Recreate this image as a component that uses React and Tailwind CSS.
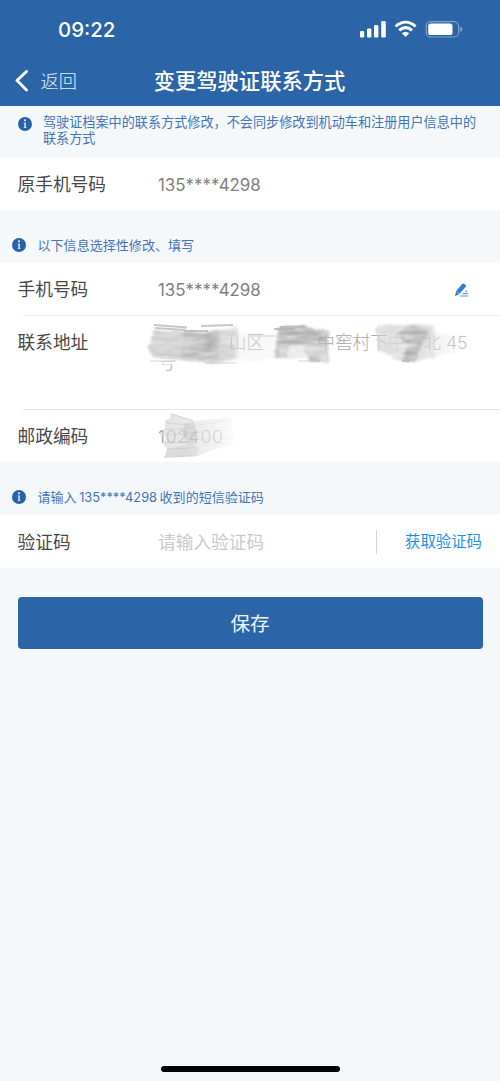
import React from "react";

function InfoIcon({ className }) {
  return (
    <svg viewBox="0 0 14 14" className={`h-3.5 w-3.5 shrink-0 ${className}`}>
      <circle cx="7" cy="7" r="7" fill="#2762a8" />
      <circle cx="7" cy="3.3" r="1.05" fill="#e8f2fb" />
      <path d="M5.7 5.5H7.8V10.4H8.6V11.1H5.6V10.4H6.4V6.2H5.7Z" fill="#e8f2fb" />
    </svg>
  );
}

function StatusIcons() {
  return (
    <svg viewBox="0 0 104 20" className="h-5 w-[104px]" fill="#fff">
      <rect x="0" y="11" width="4.2" height="6.5" rx="1.2" />
      <rect x="7" y="8.5" width="4.4" height="9" rx="1.2" />
      <rect x="14" y="5" width="4.4" height="12.5" rx="1.2" />
      <rect x="21.2" y="1" width="4.6" height="16.5" rx="1.2" />
      <g fill="none" stroke="#fff" strokeWidth="3">
        <path d="M35.6 6.5C41.8 .9 49.4 .9 55.6 6.5" />
        <path d="M39.2 10.4C43.2 6.9 48 6.9 52 10.4" />
      </g>
      <path d="M41.9 13.3Q45.6 10.3 49.3 13.3L45.6 17.1Z" />
      <rect x="66.2" y="1.6" width="32.4" height="15.4" rx="4.6" fill="none" stroke="#fff" strokeOpacity=".4" strokeWidth="1.2" />
      <rect x="68.2" y="3.6" width="24.3" height="11.4" rx="2.6" />
      <path d="M100.4 6.7Q102.2 7.3 102.2 9.3T100.4 11.9Z" fillOpacity=".5" />
    </svg>
  );
}

function EditIcon() {
  return (
    <svg viewBox="0 0 16 16" className="h-4 w-4">
      <path d="M8.9 2.2Q10.2 .9 11.4 2L12.6 3Q13.6 3.9 12.6 5.1L6.3 12.1L2 14.2L3 9.2Z" fill="#2f7de0" />
      <path d="M3.6 9.4L6.2 11.8" stroke="#fff" strokeWidth=".6" />
      <path d="M12 9.2H14.3M9.6 11.6H15M6.8 14H15" stroke="#5d9ceb" strokeWidth="1.1" />
    </svg>
  );
}

function AddressScribble() {
  return (
    <svg viewBox="0 0 350 52" className="absolute left-[140px] top-[2px] h-[52px] w-[350px]">
      <defs>
        <filter id="brush" x="-5%" y="-10%" width="110%" height="120%">
          <feTurbulence type="fractalNoise" baseFrequency="0.05 0.3" numOctaves="2" seed="8" result="n" />
          <feDisplacementMap in="SourceGraphic" in2="n" scale="7" xChannelSelector="R" yChannelSelector="G" result="d" />
          <feColorMatrix in="n" type="matrix" values="0 0 0 0 1  0 0 0 0 1  0 0 0 0 1  1.4 0 0 0 .12" result="m" />
          <feComposite in="d" in2="m" operator="in" />
          <feGaussianBlur stdDeviation=".8" />
        </filter>
        <filter id="edge"><feGaussianBlur stdDeviation=".6" /></filter>
        <linearGradient id="fadeEnd">
          <stop stopColor="#e6e6e6" stopOpacity=".7" />
          <stop offset="1" stopColor="#fff" stopOpacity=".3" />
        </linearGradient>
      </defs>
      <path d="M14 8H86V40L14 40Z" fill="#fff" fillOpacity=".6" />
      <path d="M250 10H285V42H250Z" fill="#fff" fillOpacity=".4" />
      <path d="M16 38H38V47H16Z" fill="#fff" fillOpacity=".55" />
      <g filter="url(#brush)">
        <path d="M15 12L60 14L98 10L98 43L70 45L12 39L8 30Z" fill="#c8c8c8" fillOpacity=".9" />
        <path d="M43 15L70 15L78 38L62 43L40 36Z" fill="#a3a3a3" fillOpacity=".5" />
        <path d="M64 13L80 12L78 40L68 41Z" fill="#a3a3a3" fillOpacity=".45" />
        <path d="M96 13L135 15V42L94 43Z" fill="#eee" fillOpacity=".5" />
        <path d="M138 9L168 9L189 14L188 43L170 43L163 28L150 29L147 40L134 41Z" fill="#b9b9b9" />
        <path d="M140 14L182 15L188 23L142 26Z" fill="#939393" fillOpacity=".4" />
        <path d="M138 27L188 28L186 40L140 40Z" fill="#dedede" fillOpacity=".6" />
        <path d="M236 8L294 6L295 41L263 44L238 33Z" fill="#d6d6d6" fillOpacity=".85" />
        <path d="M266 10L291 9L288 17L281 29L275 43L264 43L266 26L256 16Z" fill="#979797" fillOpacity=".65" />
        <path d="M293 13L329 17L332 31L293 40Z" fill="url(#fadeEnd)" />
      </g>
      <g fill="none" stroke="#b4b4b4" strokeWidth="2.2" opacity=".75" filter="url(#edge)">
        <path d="M14 7L47 9.5M15 10L46 12M61 8L93 7M44 13L68 13" />
        <path d="M140 9L164 8.5M134 11L155 11M262 43L270 43" />
        <path d="M110 18L136 18M10 43L36 43M65 45L96 45M158 43L180 43" opacity=".4" />
      </g>
    </svg>
  );
}

function PostcodeScribble() {
  return (
    <svg viewBox="0 0 90 52" className="absolute left-[152px] top-0 h-[52px] w-[90px]">
      <defs>
        <linearGradient id="postFade">
          <stop stopColor="#d6d6d6" />
          <stop offset=".4" stopColor="#dddddd" />
          <stop offset="1" stopColor="#fafafa" />
        </linearGradient>
        <filter id="soft"><feGaussianBlur stdDeviation=".7" /></filter>
      </defs>
      <g filter="url(#soft)">
        <path d="M19 3L43 11L79 7L82 34L58 41L46 46L12 48L15 39L11 35L14 27L7 25L13 18L13 10L18 9Z" fill="url(#postFade)" fillOpacity=".68" />
        <path d="M33 13L42 12L45 33L36 35L30 24Z" fill="#aaa" fillOpacity=".25" />
        <path d="M13 46L16 39L39 34L47 38L44 46Z" fill="#bbb" fillOpacity=".25" />
      </g>
      <g fill="none" stroke="#b4b4b4" strokeWidth="1.2" opacity=".35" filter="url(#soft)">
        <path d="M19 4L42 11M15 13L36 15M14 19L44 18M17 25L49 22M13 33L42 31M15 39L38 38M12 47L44 46" />
        <path d="M42 16L78 10M46 29L78 28M47 36L72 33" opacity=".4" />
      </g>
    </svg>
  );
}

function Row({ label, children, className }) {
  return (
    <div className={`relative flex bg-white pl-[17.5px] text-[17.7px] leading-[26px] ${className}`}>
      <div className="w-[140.5px] shrink-0 text-[#484848]">{label}</div>
      {children}
    </div>
  );
}

function Phone() {
  return <div className="text-[16.9px] text-[#808080]">135****4298</div>;
}

export default function App() {
  return (
    <div className="flex h-[1081px] w-[500px] flex-col overflow-hidden bg-[#f4f8fb] font-['Inter','Noto_Sans_CJK_SC',sans-serif]">
      <header className="h-[106px] shrink-0 bg-[#2b65a8] text-white">
        <div className="flex h-[54px] items-start justify-between pl-[58px] pr-9 pt-5">
          <div className="text-[20.4px] font-medium leading-5">09:22</div>
          <StatusIcons />
        </div>
        <div className="grid h-[52px] grid-cols-[1fr_auto_1fr] items-center pt-0.5">
          <div className="flex items-center pl-[15px]">
            <svg viewBox="0 0 14 22" className="h-[22px] w-3.5" fill="none" stroke="#fff" strokeWidth="2.9" strokeLinecap="round" strokeLinejoin="round">
              <path d="M11.5 1.5L2 10.5L11.5 20" />
            </svg>
            <span className="pl-[11.5px] pt-0.5 text-[18.2px] font-light text-[#e3f0fb]">返回</span>
          </div>
          <h1 className="-translate-x-[0.5px] pt-0.5 text-[21.3px] font-medium">变更驾驶证联系方式</h1>
          <div />
        </div>
      </header>

      <div className="flex h-[52px] shrink-0 pl-[17.5px] pt-[9px] text-[13.13px] leading-[15.5px] text-[#4474b6]">
        <InfoIcon className="mt-0.5" />
        <p className="whitespace-nowrap pl-[11.5px]">
          驾驶证档案中的联系方式修改，不会同步修改到机动车和注册用户信息中的
          <br />
          联系方式
        </p>
      </div>

      <Row label="原手机号码" className="h-[52px] shrink-0 items-center pt-0.5"><Phone /></Row>

      <div className="flex h-[53px] shrink-0 items-center pl-[11.5px] pt-[17px] text-[13.05px] text-[#4474b6]">
        <InfoIcon />
        <span className="pl-3 pt-0.5">以下信息选择性修改、填写</span>
      </div>

      <Row label="手机号码" className="h-[52px] shrink-0 items-center pt-0.5">
        <Phone />
        <div className="ml-auto pr-[31px]"><EditIcon /></div>
      </Row>
      <div className="shrink-0 bg-white pl-[23px]"><div className="h-px bg-[#e7e7e7]" /></div>
      <Row label="联系地址" className="h-[93px] shrink-0 pt-[14px]">
        <div className="whitespace-nowrap font-light leading-[22px] text-[#a8a8a8]">
          <div className="pt-[2px]">　　　　山区　　　中窖村下中　北 45</div>
          <div className="-mt-0.5">号</div>
        </div>
        <AddressScribble />
      </Row>
      <div className="shrink-0 bg-white pl-[23px]"><div className="h-px bg-[#e7e7e7]" /></div>
      <Row label="邮政编码" className="h-[52px] shrink-0 items-center pt-0.5">
        <div className="font-light tracking-[0.7px] text-[#999]">102400</div>
        <PostcodeScribble />
      </Row>

      <div className="flex h-[53px] shrink-0 items-center pl-[11.5px] pt-[17px] text-[13.05px] text-[#4474b6]">
        <InfoIcon />
        <span className="flex gap-[2.5px] pl-3 pt-0.5">
          <span>请输入</span><span className="text-[12.8px]">135****4298</span><span>收到的短信验证码</span>
        </span>
      </div>

      <Row label="验证码" className="h-[53px] shrink-0 items-center pr-[18px] pt-0.5">
        <div className="text-[#c9c9c9]">请输入验证码</div>
        <div className="-mt-0.5 ml-auto flex items-center">
          <div className="h-6 w-px bg-[#d5d5d5]" />
          <button className="pl-7 text-[15.4px] text-[#1c8fe6]">获取验证码</button>
        </div>
      </Row>

      <button className="mx-[17.5px] mt-[29px] h-[52px] shrink-0 rounded-[4px] bg-[#2b65a8] pt-1 text-[19.6px] text-[#eaf5ff]">保存</button>

      <div className="mx-auto mb-[9px] mt-auto h-1.5 w-[179px] rounded-full bg-black" />
    </div>
  );
}
